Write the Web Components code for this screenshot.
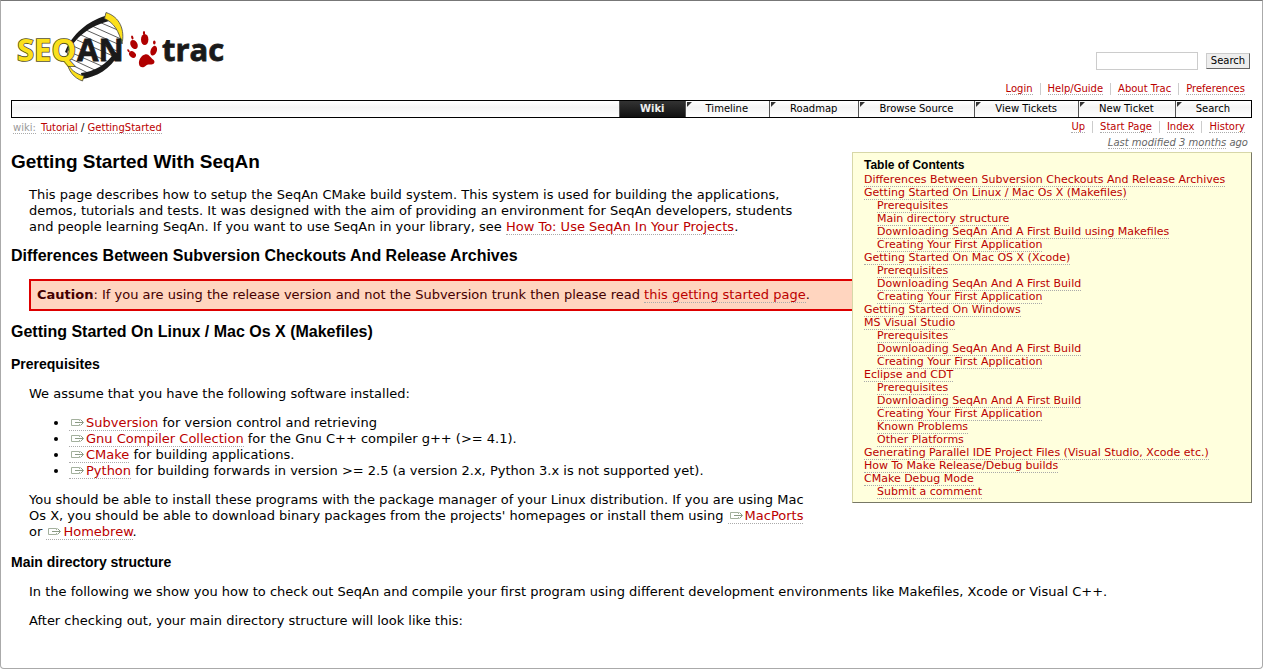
<!DOCTYPE html>
<html lang="en">
<head>
<meta charset="utf-8">
<title>Tutorial/GettingStarted – SeqAn</title>
<style>
body { margin: 0; font: 13px/16px "DejaVu Sans", sans-serif; color: #000; background: #fff; }
</style>
</head>
<body>
<trac-page></trac-page>

<script>
const define = (name, html) => {
  const template = document.createElement('template');
  template.innerHTML = html;
  customElements.define(name, class extends HTMLElement {
    constructor() {
      super();
      this.attachShadow({ mode: 'open' }).append(template.content.cloneNode(true));
    }
  });
};

define('trac-link', `
<style>
:host { display: inline; }
a { color: #b00; text-decoration: none; border-bottom: 1px dotted #aaa; }
a:hover { background: #eee; color: #555; }
</style><a href="#"><slot></slot></a>`);

define('trac-extlink', `
<style>
:host { display: inline; }
a { color: #b00; text-decoration: none; border-bottom: 1px dotted #aaa; padding-left: 2px; }
svg { width: 13px; height: 9px; margin-right: 2px; }
</style><a href="#"><svg viewBox="0 0 13 9" fill="none" stroke="#8a9a84" aria-hidden="true"><path d="M8.500 3V1.500H.5v6h8V6" stroke="#a3b09d"/><path d="M4 4.500h8M9.500 1.500l3 3-3 3"/></svg><slot></slot></a>`);

define('trac-logo', `
<style>
:host { display: block; }
a, svg { display: block; }
svg { width: 220px; height: 76px; }
text { font-family: "Open Sans", sans-serif; font-weight: 700; }
.seq { paint-order: stroke; }
</style>
<a href="#" aria-label="SeqAn trac"><svg viewBox="10 8 220 76">
<g stroke="#333" fill="none">
<path d="M99 22l21 9M92 26l29 13M86 30l34 15M81 35l36 16M77 40l36 16M73 46l36 16M70 52l34 15M69 58l28 13M70 64l20 10" stroke-width=".8"/>
</g>
<path d="M105 16C88 21 72 34 65 52l2 1C75 38 89 26 109 21z" fill="#1a1a1a"/>
<path d="M81 73C94 72 107 64 115 52l4 2C110 69 97 77 82 79z" fill="#1a1a1a"/>
<path d="M106 12.500C120 17 125 30 122 44C119 31 114 23 104.500 18.500z" fill="#fce01b" stroke="#444" stroke-width=".8"/>
<path d="M70 45C66 52 67 59 70 64" fill="none" stroke="#666"/>
<path d="M67 61C69 69 76 74 84 76L82.500 81C74 78 68 71 67 61z" fill="#fce01b" stroke="#444" stroke-width=".8"/>
<g font-size="31"><text class="seq" x="17" y="61" fill="#fbe01c" stroke="#55501f" stroke-width="1.600">SEQ</text><text x="77" y="61" fill="#1a1a1a" stroke="#1a1a1a" stroke-width=".8">AN</text></g>
<g fill="#b00000">
<ellipse cx="134" cy="44.500" rx="3.400" ry="4.800" transform="rotate(-30 134 44.500)"/>
<ellipse cx="144.700" cy="39.500" rx="3.700" ry="5.500"/>
<ellipse cx="153.700" cy="50.700" rx="3.100" ry="5" transform="rotate(20 153.700 50.700)"/>
<ellipse cx="132.500" cy="54.500" rx="2.800" ry="3.800" transform="rotate(-50 132.500 54.500)"/>
<ellipse cx="132.300" cy="37.500" rx="1.100" ry="2" transform="rotate(-15 132.300 37.500)"/>
<ellipse cx="144" cy="33" rx="1.100" ry="2"/>
<ellipse cx="154.300" cy="42.500" rx="1.300" ry="2"/>
<ellipse cx="128.500" cy="50.700" rx="1" ry="1.700" transform="rotate(-35 128.500 50.700)"/>
<path d="M145 54.500c4-1 5 3 8 5s1 5-1.500 5-4-.5-6 1.500-6 2-6.500-2 2-8.500 6-9.500z"/>
</g>
<text x="162" y="61" font-size="31" fill="#1a1a1a" stroke="#1a1a1a" stroke-width=".8">trac</text>
</svg></a>`);

define('trac-search', `
<style>
:host { display: block; }
form { display: flex; align-items: center; gap: 8px; margin: 0; }
input { box-sizing: border-box; width: 102px; height: 18px; border: 1px solid #ccc; padding: 0 2px; background: #fff; font: 11px "DejaVu Sans", sans-serif; }
button { box-sizing: border-box; width: 44px; height: 16px; padding: 0; border: 1px solid; border-color: #ccc #666 #666 #ccc; background: #eee; color: #000; font: 10px/14px "DejaVu Sans", sans-serif; }
</style>
<form onsubmit="return false"><input type="text" aria-label="Search text"><button type="submit">Search</button></form>`);

define('trac-ctxnav', `
<style>
:host { display: block; font-size: 10px; line-height: 14px; }
nav { display: flex; justify-content: flex-end; }
::slotted(trac-link) { padding: 0 7px; border-left: 1px solid #ccc; line-height: 12px; height: 12px; }
::slotted(trac-link:first-child) { border-left: 0; }
</style><nav><slot></slot></nav>`);

define('trac-tab', `
<style>
:host { display: flex; flex: none; border-left: 1px solid #555; }
a { display: block; flex: 1; padding: 0 21px 0 20px; color: #000; text-decoration: none; text-align: center; background: linear-gradient(135deg, #333 3px, transparent 4px) 1px 1px / 5px 5px no-repeat; }
:host([active]) { background: linear-gradient(#333, #111); font-weight: bold; }
:host([active]) a { color: #eee; background: none; padding: 0 20px; }
</style><a href="#"><slot></slot></a>`);

define('trac-mainnav', `
<style>
:host { display: block; border: 1px solid #000; font-size: 10px; line-height: 16px; background: linear-gradient(#fff, #f4f4f4 40%, #fff); }
nav { display: flex; justify-content: flex-end; }
</style><nav><slot></slot></nav>`);

define('trac-header', `
<style>
:host { display: flex; justify-content: space-between; align-items: flex-start; padding: 7px 2px 0 0; height: 75px; margin-left: -1px; }
trac-search { padding-top: 44px; }
</style><trac-logo></trac-logo><trac-search></trac-search>`);

define('trac-path', `
<style>
:host { display: flex; justify-content: space-between; font-size: 10px; line-height: 14px; padding: 3px 0 0 2px; }
.root { color: #999; border-bottom: 1px dotted #aaa; text-decoration: none; margin-right: 2px; }
</style>
<nav aria-label="Path"><a class="root" href="#">wiki:</a> <trac-link>Tutorial</trac-link> / <trac-link>GettingStarted</trac-link></nav>
<trac-ctxnav><trac-link>Up</trac-link><trac-link>Start Page</trac-link><trac-link>Index</trac-link><trac-link>History</trac-link></trac-ctxnav>`);

define('trac-modified', `
<style>
:host { display: block; text-align: right; font-size: 10px; line-height: 14px; font-style: italic; color: #666; padding: 1px 4px 0 0; }
a { color: inherit; text-decoration: none; border-bottom: 1px dotted #aaa; }
</style><a href="#">Last modified</a> <a href="#">3 months</a> ago`);

define('trac-toc', `
<style>
:host { display: block; float: right; position: relative; box-sizing: border-box; width: 400px; margin: 2px 0 20px 38px; padding: 5px 11px 4px; border: 1px solid; border-color: #d7d7a8 #776 #776 #d7d7a8; background: #ffd; font-size: 11px; line-height: 13px; white-space: nowrap; }
h4 { margin: 0; font: bold 12px/15px "Liberation Sans", sans-serif; }
ol { margin: 0; padding: 0; list-style: none; }
</style><h4>Table of Contents</h4><ol><slot></slot></ol>`);

define('trac-toc-item', `
<style>
:host { display: block; }
:host([sub]) { padding-left: 13px; }
</style><trac-link><slot></slot></trac-link>`);

define('trac-caution', `
<style>
:host { display: block; margin: 13px 0 0 18px; padding: 6px; border: 2px solid #d00; background: #ffd5bf; color: #400; }
</style><slot></slot>`);

define('trac-article', `
<style>
:host { display: block; }
h1, h2, h3 { margin: 0; font-family: "Liberation Sans", sans-serif; font-weight: bold; }
h1 { font-size: 19px; line-height: 24px; }
h2 { font-size: 16px; line-height: 20px; margin-top: 11px; }
h3 { font-size: 14px; line-height: 18px; margin-top: 13px; }
p { margin: 13px 0 0 18px; }
ul { margin: 13px 0 0 18px; padding: 0 0 0 40px; }
</style>
<trac-toc>
<trac-toc-item>Differences Between Subversion Checkouts And Release Archives</trac-toc-item>
<trac-toc-item>Getting Started On Linux / Mac Os X (Makefiles)</trac-toc-item>
<trac-toc-item sub>Prerequisites</trac-toc-item>
<trac-toc-item sub>Main directory structure</trac-toc-item>
<trac-toc-item sub>Downloading SeqAn And A First Build using Makefiles</trac-toc-item>
<trac-toc-item sub>Creating Your First Application</trac-toc-item>
<trac-toc-item>Getting Started On Mac OS X (Xcode)</trac-toc-item>
<trac-toc-item sub>Prerequisites</trac-toc-item>
<trac-toc-item sub>Downloading SeqAn And A First Build</trac-toc-item>
<trac-toc-item sub>Creating Your First Application</trac-toc-item>
<trac-toc-item>Getting Started On Windows</trac-toc-item>
<trac-toc-item>MS Visual Studio</trac-toc-item>
<trac-toc-item sub>Prerequisites</trac-toc-item>
<trac-toc-item sub>Downloading SeqAn And A First Build</trac-toc-item>
<trac-toc-item sub>Creating Your First Application</trac-toc-item>
<trac-toc-item>Eclipse and CDT</trac-toc-item>
<trac-toc-item sub>Prerequisites</trac-toc-item>
<trac-toc-item sub>Downloading SeqAn And A First Build</trac-toc-item>
<trac-toc-item sub>Creating Your First Application</trac-toc-item>
<trac-toc-item sub>Known Problems</trac-toc-item>
<trac-toc-item sub>Other Platforms</trac-toc-item>
<trac-toc-item>Generating Parallel IDE Project Files (Visual Studio, Xcode etc.)</trac-toc-item>
<trac-toc-item>How To Make Release/Debug builds</trac-toc-item>
<trac-toc-item>CMake Debug Mode</trac-toc-item>
<trac-toc-item sub>Submit a comment</trac-toc-item>
</trac-toc>
<h1>Getting Started With SeqAn</h1>
<p>This page describes how to setup the SeqAn CMake build system. This system is used for building the applications, demos, tutorials and tests. It was designed with the aim of providing an environment for SeqAn developers, students and people learning SeqAn. If you want to use SeqAn in your library, see <trac-link>How To: Use SeqAn In Your Projects</trac-link>.</p>
<h2>Differences Between Subversion Checkouts And Release Archives</h2>
<trac-caution><strong>Caution</strong>: If you are using the release version and not the Subversion trunk then please read <trac-link>this getting started page</trac-link>.</trac-caution>
<h2>Getting Started On Linux / Mac Os X (Makefiles)</h2>
<h3>Prerequisites</h3>
<p>We assume that you have the following software installed:</p>
<ul>
<li><trac-extlink>Subversion</trac-extlink> for version control and retrieving</li>
<li><trac-extlink>Gnu Compiler Collection</trac-extlink> for the Gnu C++ compiler g++ (&gt;= 4.1).</li>
<li><trac-extlink>CMake</trac-extlink> for building applications.</li>
<li><trac-extlink>Python</trac-extlink> for building forwards in version &gt;= 2.5 (a version 2.x, Python 3.x is not supported yet).</li>
</ul>
<p>You should be able to install these programs with the package manager of your Linux distribution. If you are using Mac Os X, you should be able to download binary packages from the projects' homepages or install them using <trac-extlink>MacPorts</trac-extlink> or <trac-extlink>Homebrew</trac-extlink>.</p>
<h3>Main directory structure</h3>
<p>In the following we show you how to check out SeqAn and compile your first program using different development environments like Makefiles, Xcode or Visual C++.</p>
<p>After checking out, your main directory structure will look like this:</p>`);

define('trac-page', `
<style>
:host { display: block; box-sizing: border-box; min-height: 100vh; padding: 0 10px 20px; border: 1px solid #aaa; border-top-color: #777; border-radius: 0 0 4px 4px; }
trac-ctxnav { margin-bottom: 5px; }
</style>
<trac-header></trac-header>
<trac-ctxnav><trac-link>Login</trac-link><trac-link>Help/Guide</trac-link><trac-link>About Trac</trac-link><trac-link>Preferences</trac-link></trac-ctxnav>
<trac-mainnav><trac-tab active>Wiki</trac-tab><trac-tab>Timeline</trac-tab><trac-tab>Roadmap</trac-tab><trac-tab>Browse Source</trac-tab><trac-tab>View Tickets</trac-tab><trac-tab>New Ticket</trac-tab><trac-tab>Search</trac-tab></trac-mainnav>
<trac-path></trac-path>
<trac-modified></trac-modified>
<trac-article></trac-article>`);
</script>
</body>
</html>
